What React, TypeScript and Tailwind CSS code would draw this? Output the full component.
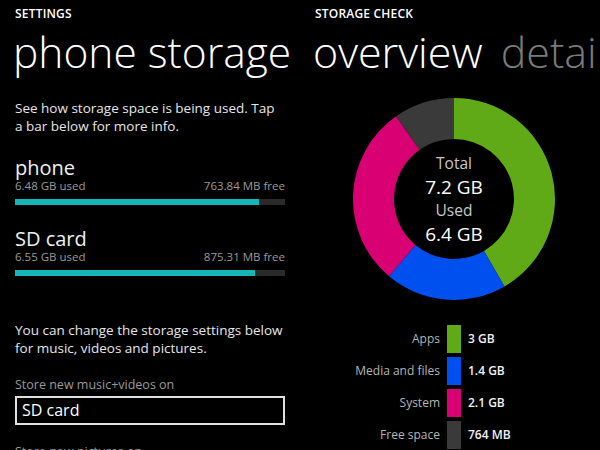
const font = { fontFamily: '"Open Sans", "Noto Sans", sans-serif' };

const drives = [
  { name: "phone", used: "6.48 GB used", free: "763.84 MB free", pct: 90.4 },
  { name: "SD card", used: "6.55 GB used", free: "875.31 MB free", pct: 88.9 },
];

const parts = [
  { label: "Apps", value: "3 GB", size: 3, color: "#60a917", swatch: "bg-[#60a917]" },
  { label: "Media and files", value: "1.4 GB", size: 1.4, color: "#0050ef", swatch: "bg-[#0050ef]" },
  { label: "System", value: "2.1 GB", size: 2.1, color: "#d80073", swatch: "bg-[#d80073]" },
  { label: "Free space", value: "764 MB", size: 0.7, color: "#3a3a3a", swatch: "bg-[#3a3a3a]" },
];

// donut slice path, angles in degrees clockwise from 12 o'clock
function slice(cx: number, cy: number, r: number, ri: number, a0: number, a1: number) {
  const p = (rad: number, a: number) => {
    const t = ((a - 90) * Math.PI) / 180;
    return `${cx + rad * Math.cos(t)} ${cy + rad * Math.sin(t)}`;
  };
  const big = a1 - a0 > 180 ? 1 : 0;
  return `M ${p(r, a0)} A ${r} ${r} 0 ${big} 1 ${p(r, a1)} L ${p(ri, a1)} A ${ri} ${ri} 0 ${big} 0 ${p(ri, a0)} Z`;
}

function Donut() {
  const total = parts.reduce((s, p) => s + p.size, 0);
  let acc = 0;
  return (
    <div className="relative w-[204px] h-[204px]">
      <svg width="204" height="204" viewBox="0 0 204 204">
        {parts.map((p) => {
          const a0 = (acc / total) * 360;
          acc += p.size;
          const a1 = (acc / total) * 360;
          return <path key={p.label} d={slice(102, 102, 101, 60, a0, a1)} fill={p.color} />;
        })}
      </svg>
      <div className="absolute inset-0 flex flex-col items-center justify-center">
        <div className="text-[15.5px] leading-[23px] text-[#c8c8c8]">Total</div>
        <div className="text-[19px] leading-[24px] text-white">7.2 GB</div>
        <div className="text-[15.5px] leading-[23px] text-[#c8c8c8]">Used</div>
        <div className="text-[19px] leading-[24px] text-white">6.4 GB</div>
      </div>
    </div>
  );
}

export default function App() {
  return (
    <main style={font} className="w-[600px] h-[450px] bg-black text-white overflow-hidden flex">
      {/* settings pane */}
      <section className="w-[300px] shrink-0 pl-[15px] pr-[15px]">
        <h2 className="text-[12px] font-semibold leading-[14px] pt-[7px] tracking-[0.2px]">SETTINGS</h2>
        <h1 className="text-[42.5px] font-light leading-[50px] mt-[6px] -ml-[2px] whitespace-nowrap">phone storage</h1>
        <p className="text-[13.5px] leading-[18px] mt-[22px] text-[#e6e6e6]">
          See how storage space is being used. Tap a bar below for more info.
        </p>

        <div className="mt-[21px] flex flex-col gap-[22px]">
          {drives.map((d) => (
            <div key={d.name}>
              <div className="text-[20px] leading-[23px] text-[#f0f0f0]">{d.name}</div>
              <div className="flex justify-between text-[11.5px] leading-[14px] text-[#9a9a9a]">
                <span>{d.used}</span>
                <span>{d.free}</span>
              </div>
              <div className="mt-[6px] h-[6px] bg-[#2a2a2a]">
                <div className="h-full bg-[#17b6b6]" style={{ width: `${d.pct}%` }} />
              </div>
            </div>
          ))}
        </div>

        <p className="text-[13.5px] leading-[18px] mt-[45px] text-[#e6e6e6]">
          You can change the storage settings below for music, videos and pictures.
        </p>
        <div className="text-[12.5px] leading-[16px] mt-[20px] text-[#9a9a9a]">Store new music+videos on</div>
        <div className="mt-[3px] h-[29px] border-2 border-[#e0e0e0] px-[5px] text-[16px] leading-[25px]">SD card</div>
        <div className="text-[12.5px] leading-[16px] mt-[19px] text-[#9a9a9a]">Store new pictures on</div>
      </section>

      {/* storage check pane */}
      <section className="flex-1 pl-[15px] min-w-0">
        <h2 className="text-[12px] font-semibold leading-[14px] pt-[7px] tracking-[0.2px]">STORAGE CHECK</h2>
        <h1 className="text-[43px] font-light leading-[50px] mt-[6px] -ml-[2px] whitespace-nowrap">
          overview <span className="ml-[7px] text-[#7a7a7a]">details</span>
        </h1>

        <div className="mt-[20px] ml-[37px]">
          <Donut />
        </div>

        <div className="mt-[24px] grid grid-cols-[125px_14px_auto] gap-x-[7px] gap-y-[4px] items-center">
          {parts.map((p) => (
            <div key={p.label} className="contents">
              <div className="text-right text-[12px] text-[#b4b4b4]">{p.label}</div>
              <div className={`h-[28px] ${p.swatch}`} />
              <div className="text-[12px] font-semibold text-[#f0f0f0]">{p.value}</div>
            </div>
          ))}
        </div>
      </section>
    </main>
  );
}
